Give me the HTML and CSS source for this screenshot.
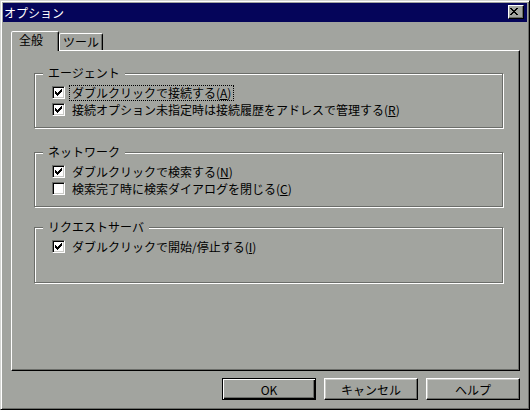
FILE: index.html
```html
<!DOCTYPE html>
<html lang="ja">
<head>
    <meta charset="UTF-8">
    <meta name="viewport" content="width=device-width, initial-scale=1.0">
    <title>オプション</title>
    <link rel="stylesheet" href="styles.css">
</head>
<body>

    <div class="window">
        <div class="titlebar">
            <span class="title">オプション</span>
            <button class="close" type="button">
                <svg width="14" height="12" viewBox="3 1 14 12" shape-rendering="crispEdges"><path d="M4 3h2v1h-2z M10 3h2v1h-2z M5 4h2v1h-2z M9 4h2v1h-2z M6 5h4v1h-4z M7 6h2v1h-2z M6 7h4v1h-4z M5 8h2v1h-2z M9 8h2v1h-2z M4 9h2v1h-2z M10 9h2v1h-2z"/></svg>
            </button>
        </div>

        <div class="body">
            <div class="tabs">
                <div class="tab tab-active">全般</div>
                <div class="tab tab-tools">ツール</div>
            </div>

            <div class="panel">
                <div class="group group-agent">
                    <div class="group-title">エージェント</div>
                    <label class="check"><span class="box"><svg width="11" height="11" viewBox="0 0 11 11" shape-rendering="crispEdges"><path d="M8 2h1v1h-1z M7 3h2v1h-2z M2 4h1v1h-1z M6 4h3v1h-3z M2 5h2v1h-2z M5 5h3v1h-3z M2 6h5v1h-5z M3 7h3v1h-3z M4 8h1v1h-1z"/></svg></span><span class="text focus">ダブルクリックで接続する(<u>A</u>)</span></label>
                    <label class="check"><span class="box"><svg width="11" height="11" viewBox="0 0 11 11" shape-rendering="crispEdges"><path d="M8 2h1v1h-1z M7 3h2v1h-2z M2 4h1v1h-1z M6 4h3v1h-3z M2 5h2v1h-2z M5 5h3v1h-3z M2 6h5v1h-5z M3 7h3v1h-3z M4 8h1v1h-1z"/></svg></span><span class="text">接続オプション未指定時は接続履歴をアドレスで管理する(<u>R</u>)</span></label>
                </div>

                <div class="group group-network">
                    <div class="group-title">ネットワーク</div>
                    <label class="check"><span class="box"><svg width="11" height="11" viewBox="0 0 11 11" shape-rendering="crispEdges"><path d="M8 2h1v1h-1z M7 3h2v1h-2z M2 4h1v1h-1z M6 4h3v1h-3z M2 5h2v1h-2z M5 5h3v1h-3z M2 6h5v1h-5z M3 7h3v1h-3z M4 8h1v1h-1z"/></svg></span><span class="text">ダブルクリックで検索する(<u>N</u>)</span></label>
                    <label class="check"><span class="box"></span><span class="text">検索完了時に検索ダイアログを閉じる(<u>C</u>)</span></label>
                </div>

                <div class="group group-server">
                    <div class="group-title">リクエストサーバ</div>
                    <label class="check"><span class="box"><svg width="11" height="11" viewBox="0 0 11 11" shape-rendering="crispEdges"><path d="M8 2h1v1h-1z M7 3h2v1h-2z M2 4h1v1h-1z M6 4h3v1h-3z M2 5h2v1h-2z M5 5h3v1h-3z M2 6h5v1h-5z M3 7h3v1h-3z M4 8h1v1h-1z"/></svg></span><span class="text">ダブルクリックで開始/停止する(<u>I</u>)</span></label>
                </div>
            </div>

            <div class="buttons">
                <button class="btn btn-default" type="button">OK</button>
                <button class="btn" type="button">キャンセル</button>
                <button class="btn" type="button">ヘルプ</button>
            </div>
        </div>
    </div>

</body>
</html>
```

FILE: styles.css
```css
/* Diálogo de opciones al estilo Windows clásico */
body {
    margin: 0;
    font-family: "Noto Sans CJK JP", "Noto Sans", sans-serif;
    font-size: 12px;
    color: #000;
    background-color: #a2a49f;
}

/* Marco de la ventana */
.window {
    box-sizing: border-box;
    width: 530px;
    height: 410px;
    padding: 2px;
    background-color: #a2a49f;
    border: 1px solid;
    border-color: #d4d5d2 #000 #000 #d4d5d2;
    box-shadow: inset 1px 1px #fff, inset -1px -1px #6b6d69;
}

.titlebar {
    display: flex;
    align-items: flex-start;
    justify-content: space-between;
    height: 19px;
    padding: 0 3px 0 1px;
    background-color: #05055a;
}
.title {
    color: #fff;
    line-height: 19px;
}
.close {
    box-sizing: border-box;
    width: 16px;
    height: 14px;
    margin-top: 2px;
    padding: 0;
    display: flex;
    align-items: center;
    justify-content: center;
    background-color: #a2a49f;
    border: 1px solid;
    border-color: #fff #000 #000 #fff;
    box-shadow: inset -1px -1px #6b6d69;
}

.body {
    padding: 9px 7px 0 8px;
}

/* Pestañas */
.tabs {
    position: relative;
    z-index: 1;
    display: flex;
    align-items: flex-end;
    height: 20px;
    margin-bottom: -1px;
}
.tab {
    box-sizing: border-box;
    height: 17px;
    margin-bottom: 1px;
    line-height: 16px;
    background-color: #a2a49f;
    border: 1px solid;
    border-bottom: 0;
    border-color: #fff #000 transparent #fff;
    border-radius: 2px 2px 0 0;
    box-shadow: inset -1px 0 #6b6d69;
}
.tab-active {
    width: 48px;
    height: 20px;
    margin-bottom: 0;
    padding-left: 7px;
}
.tab-tools {
    width: 44px;
    padding-left: 3px;
}

.panel {
    box-sizing: border-box;
    height: 321px;
    padding-top: 22px;
    border: 1px solid;
    border-color: #fff #000 #000 #fff;
    box-shadow: inset -1px -1px #6b6d69;
}

/* Grupos con borde grabado */
.group {
    box-sizing: border-box;
    height: 55px;
    margin: 0 16px 0 22px;
    padding-left: 17px;
    border: 1px solid #6b6d69;
    box-shadow: inset 1px 1px #fff, 1px 1px #fff;
}
.group-network {
    margin-top: 24px;
}
.group-server {
    height: 56px;
    margin-top: 20px;
}
.group-title {
    width: fit-content;
    height: 14px;
    line-height: 14px;
    margin: -8px 0 4px -9px;
    padding: 0 5px;
    background-color: #a2a49f;
}

.check {
    display: flex;
    align-items: center;
    height: 17px;
}
.box {
    box-sizing: border-box;
    display: flex;
    width: 13px;
    height: 13px;
    background-color: #fff;
    border: 1px solid;
    border-color: #6b6d69 #fff #fff #6b6d69;
    box-shadow: inset 1px 1px #000, inset -1px -1px #c9cac6;
}
.text {
    margin-left: 5px;
    padding: 0 2px;
    line-height: 14px;
}
.focus {
    outline: 1px dotted #000;
}

/* Botones inferiores */
.buttons {
    display: flex;
    justify-content: flex-end;
    gap: 8px;
    margin-top: 7px;
}
.btn {
    box-sizing: border-box;
    width: 94px;
    height: 22px;
    padding: 0;
    font: inherit;
    color: #000;
    background-color: #a2a49f;
    border: 1px solid;
    border-color: #fff #000 #000 #fff;
    box-shadow: inset -1px -1px #6b6d69, inset 1px 1px #c9cac6;
}
.btn-default {
    border-color: #000;
    box-shadow: inset 1px 1px #fff, inset -1px -1px #000, inset -2px -2px #6b6d69;
}
```
